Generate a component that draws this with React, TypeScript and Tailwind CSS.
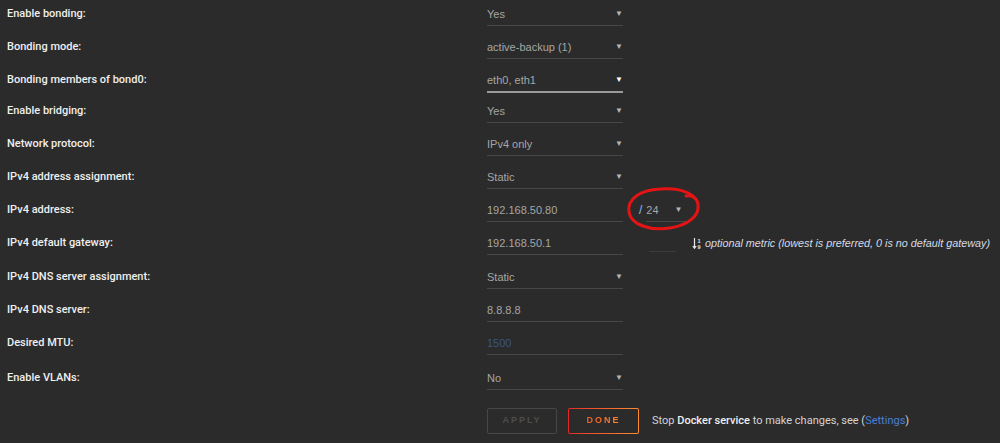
import React from "react";

type Row = {
  label: string;
  value: string;
  select?: boolean;
  focused?: boolean;
  placeholder?: boolean;
  extra?: "prefix" | "metric";
  h?: string;
};

const rows: Row[] = [
  { label: "Enable bonding:", value: "Yes", select: true },
  { label: "Bonding mode:", value: "active-backup (1)", select: true },
  { label: "Bonding members of bond0:", value: "eth0, eth1", select: true, focused: true, h: "h-[31px]" },
  { label: "Enable bridging:", value: "Yes", select: true },
  { label: "Network protocol:", value: "IPv4 only", select: true },
  { label: "IPv4 address assignment:", value: "Static", select: true },
  { label: "IPv4 address:", value: "192.168.50.80", extra: "prefix" },
  { label: "IPv4 default gateway:", value: "192.168.50.1", extra: "metric", h: "h-[34px]" },
  { label: "IPv4 DNS server assignment:", value: "Static", select: true },
  { label: "IPv4 DNS server:", value: "8.8.8.8" },
  { label: "Desired MTU:", value: "1500", placeholder: true, h: "h-[35px]" },
  { label: "Enable VLANs:", value: "No", select: true },
];

function Caret({ light }: { light?: boolean }) {
  return (
    <span className={`text-[8px] leading-none ${light ? "text-white" : "text-[#b5b5b5]"}`}>▼</span>
  );
}

function SortIcon() {
  return (
    <svg width="11" height="13" viewBox="0 0 11 13" className="mr-[2px]">
      <path d="M2.5 1v10M0.8 9l1.7 2.2L4.2 9" stroke="#e8e8e8" strokeWidth="1.2" fill="none" />
      <text x="5.5" y="5.5" fontSize="5.5" fill="#e8e8e8" fontFamily="Liberation Sans, sans-serif" fontWeight="700">1</text>
      <text x="5.5" y="11.5" fontSize="5.5" fill="#e8e8e8" fontFamily="Liberation Sans, sans-serif" fontWeight="700">9</text>
    </svg>
  );
}

function Field({ row }: { row: Row }) {
  const border = row.focused ? "border-b-2 border-[#9a9a9a]" : "border-b border-[#474747]";
  return (
    <div className={`w-[136px] flex items-center justify-between pb-[3px] ${border}`}>
      <span
        className={`text-[11px] leading-[16px] ${row.placeholder ? "text-[#3b5483]" : "text-[#a6a6a6]"}`}
      >
        {row.value}
      </span>
      {row.select && <Caret light={row.focused} />}
    </div>
  );
}

export default function App() {
  return (
    <div
      className="relative w-[1000px] h-[443px] bg-[#2b2b2b] overflow-hidden"
      style={{ fontFamily: '"Liberation Sans", Arial, sans-serif' }}
    >
      <div className="flex flex-col">
        {rows.map((row) => (
          <div key={row.label} className={`${row.h ?? "h-[33px]"} flex items-start pt-[6px]`}>
            <div className="w-[487px] pl-[7px] font-['Roboto',sans-serif] text-[11px] leading-[16px] font-medium text-[#efefef]">
              {row.label}
            </div>
            <Field row={row} />
            {row.extra === "prefix" && (
              <div className="flex items-start ml-[16px]">
                <span className="text-[12px] leading-[16px] text-[#8fbaff] mr-[4px]">/</span>
                <div className="w-[42px] flex items-center justify-between pb-[3px] border-b border-[#474747] pr-[6px]">
                  <span className="text-[11px] leading-[16px] text-[#a6a6a6]">24</span>
                  <Caret />
                </div>
              </div>
            )}
            {row.extra === "metric" && (
              <div className="flex items-start">
                <div className="w-[27px] ml-[26px] mt-[16px] border-b border-[#3d3d3d]" />
                <div className="flex items-center ml-[16px] h-[16px]">
                  <SortIcon />
                  <span className="text-[10.8px] italic text-[#d6dbe6]">
                    optional metric (lowest is preferred, 0 is no default gateway)
                  </span>
                </div>
              </div>
            )}
          </div>
        ))}
      </div>

      <div className="flex items-center mt-[11px] pl-[487px]">
        <button className="w-[70px] h-[26px] border border-[#474747] rounded-[2px] text-[9px] font-bold tracking-[2px] text-[#4e4e4e]">
          APPLY
        </button>
        <div className="ml-[11px] w-[71px] h-[26px] rounded-[2px] p-px bg-gradient-to-r from-[#e22828] to-[#ff8c2f]">
          <div className="w-full h-full bg-[#2b2b2b] rounded-[1px] flex items-center justify-center">
            <span className="text-[9px] font-bold tracking-[2px] bg-gradient-to-r from-[#f05a28] to-[#ff8c2f] bg-clip-text text-transparent">
              DONE
            </span>
          </div>
        </div>
        <span className="ml-[13px] font-['Roboto',sans-serif] text-[11px] text-[#d4d4d4]">
          Stop <b className="font-medium text-[#efefef]">Docker service</b> to make changes, see (
          <span className="text-[#4a7fd6]">Settings</span>)
        </span>
      </div>

      {/* hand-drawn annotation */}
      <svg className="absolute left-[620px] top-[180px]" width="86" height="58" viewBox="0 0 86 58">
        <path
          d="M78 28 C 80 16, 64 7, 40 9 C 20 10, 7 19, 9 32 C 11 45, 30 51, 50 48 C 68 45, 80 36, 78 24 C 77 18, 72 15, 66 16"
          stroke="#e41414"
          strokeWidth="3"
          fill="none"
          strokeLinecap="round"
        />
      </svg>
    </div>
  );
}
